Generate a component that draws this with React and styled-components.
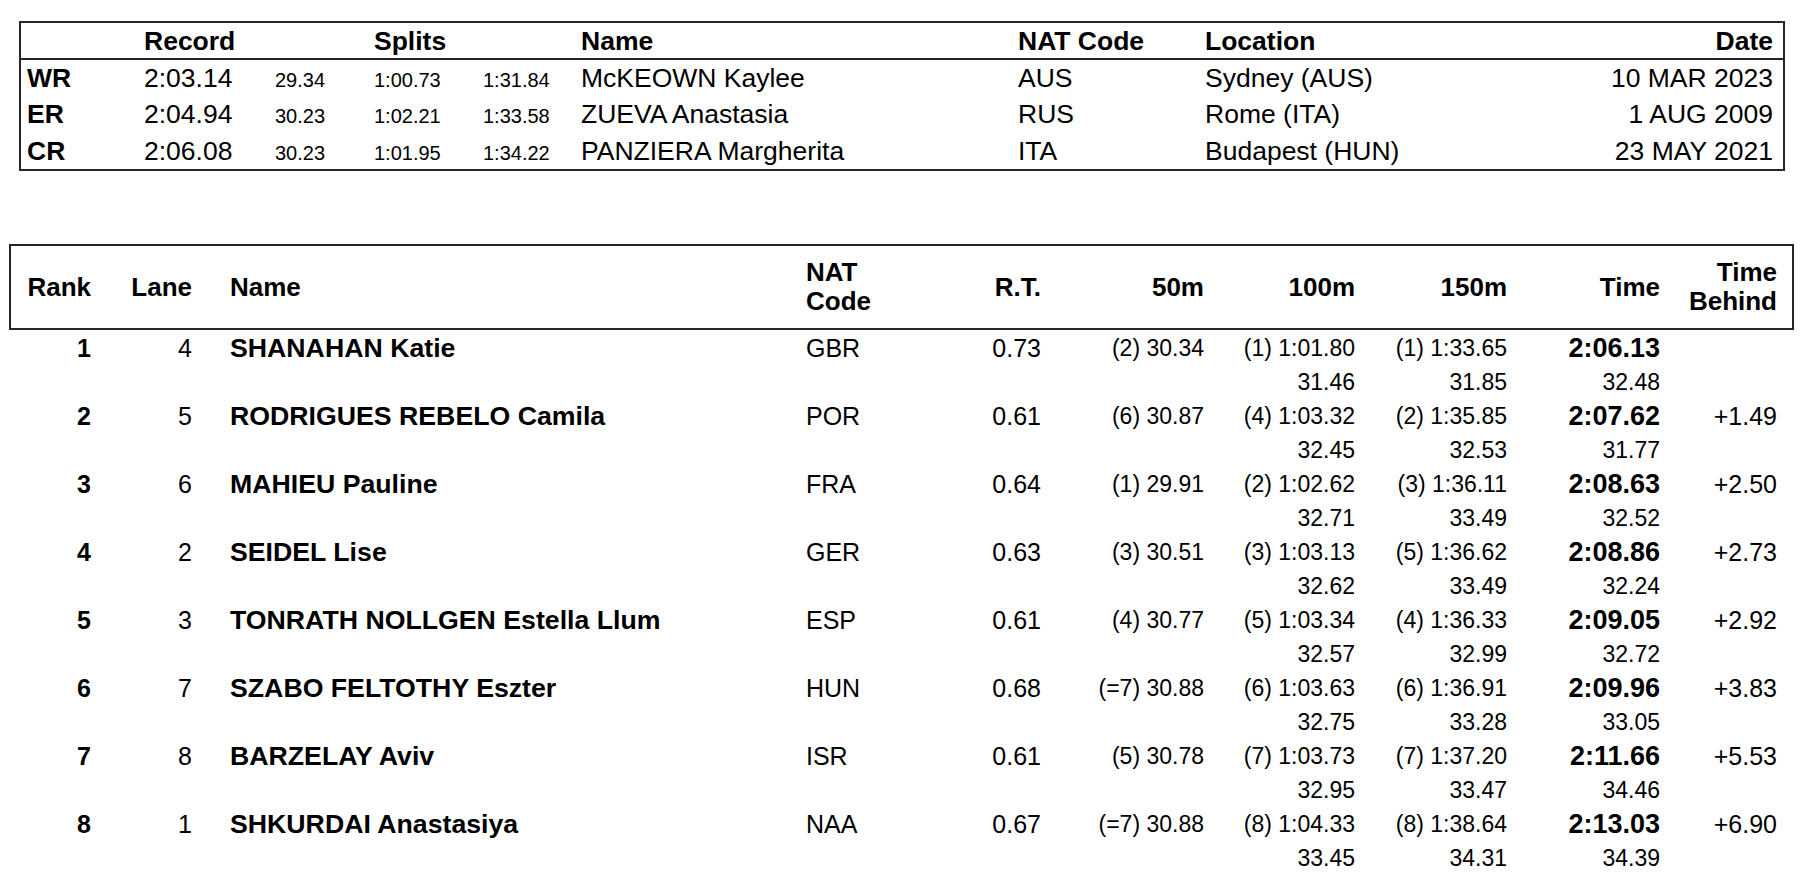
import React from "react";
import styled, { createGlobalStyle } from "styled-components";

const GlobalStyle = createGlobalStyle`
  html, body {
    margin: 0;
    padding: 0;
    background: #ffffff;
  }
  body {
    font-family: "Liberation Sans", Arial, sans-serif;
    color: #000;
  }
`;

const Page = styled.div`
  display: flex;
  flex-direction: column;
  padding-top: 21px;
`;

/* ---------- records box ---------- */

const RecordBox = styled.div`
  margin-left: 19px;
  width: 1766px;
  box-sizing: border-box;
  border: 2px solid #262626;
`;

const recordCols = "117px 131px 99px 109px 98px 437px 187px 1fr auto";

const RecordHead = styled.div`
  display: grid;
  grid-template-columns: ${recordCols};
  align-items: baseline;
  height: 35px;
  line-height: 36px;
  padding: 0 10px 0 6px;
  border-bottom: 2px solid #262626;
  font-size: 26.5px;
  font-weight: 700;
`;

const RecordRow = styled.div`
  display: grid;
  grid-template-columns: ${recordCols};
  align-items: baseline;
  height: 36.4px;
  line-height: 36px;
  padding: 0 10px 0 6px;
  font-size: 26.5px;
`;

const RecCell = styled.span`
  white-space: nowrap;
  font-weight: ${(p) => (p.$bold ? 700 : "inherit")};
  font-size: ${(p) => (p.$small ? "20px" : "inherit")};
  text-align: ${(p) => p.$align || "left"};
`;

/* ---------- results ---------- */

const Results = styled.div`
  margin-top: 73px;
  margin-left: 9px;
  width: 1785px;
  display: flex;
  flex-direction: column;
`;

const resultCols = "80px 101px 614px 144px 91px 163px 151px 152px 153px 117px";

const ResultHead = styled.div`
  display: grid;
  grid-template-columns: ${resultCols};
  align-items: center;
  height: 82px;
  box-sizing: content-box;
  padding-right: 13px;
  border: 2px solid #262626;
  font-size: 26px;
  font-weight: 700;
  line-height: 29px;
`;

const HeadCell = styled.div`
  text-align: ${(p) => p.$align || "left"};
  padding-left: ${(p) => p.$indent || 0}px;
  white-space: nowrap;
`;

const ResultRow = styled.div`
  display: grid;
  grid-template-columns: ${resultCols};
  height: 68px;
  margin: 0 2px;
  align-items: start;
`;

const Cell = styled.div`
  display: flex;
  flex-direction: column;
  align-items: ${(p) => (p.$align === "right" ? "flex-end" : "flex-start")};
  padding-left: ${(p) => p.$indent || 0}px;
  line-height: 37px;
  white-space: nowrap;
`;

const Main = styled.span`
  font-size: ${(p) => p.$size || 25}px;
  font-weight: ${(p) => (p.$bold ? 700 : 400)};
`;

const Sub = styled.span`
  margin-top: -3px;
  font-size: 23px;
`;

const records = [
  ["WR", "2:03.14", "29.34", "1:00.73", "1:31.84", "McKEOWN Kaylee", "AUS", "Sydney (AUS)", "10 MAR 2023"],
  ["ER", "2:04.94", "30.23", "1:02.21", "1:33.58", "ZUEVA Anastasia", "RUS", "Rome (ITA)", "1 AUG 2009"],
  ["CR", "2:06.08", "30.23", "1:01.95", "1:34.22", "PANZIERA Margherita", "ITA", "Budapest (HUN)", "23 MAY 2021"],
];

const results = [
  { rank: 1, lane: 4, name: "SHANAHAN Katie", nat: "GBR", rt: "0.73", s50: "(2) 30.34", s100: ["(1) 1:01.80", "31.46"], s150: ["(1) 1:33.65", "31.85"], time: ["2:06.13", "32.48"], behind: "" },
  { rank: 2, lane: 5, name: "RODRIGUES REBELO Camila", nat: "POR", rt: "0.61", s50: "(6) 30.87", s100: ["(4) 1:03.32", "32.45"], s150: ["(2) 1:35.85", "32.53"], time: ["2:07.62", "31.77"], behind: "+1.49" },
  { rank: 3, lane: 6, name: "MAHIEU Pauline", nat: "FRA", rt: "0.64", s50: "(1) 29.91", s100: ["(2) 1:02.62", "32.71"], s150: ["(3) 1:36.11", "33.49"], time: ["2:08.63", "32.52"], behind: "+2.50" },
  { rank: 4, lane: 2, name: "SEIDEL Lise", nat: "GER", rt: "0.63", s50: "(3) 30.51", s100: ["(3) 1:03.13", "32.62"], s150: ["(5) 1:36.62", "33.49"], time: ["2:08.86", "32.24"], behind: "+2.73" },
  { rank: 5, lane: 3, name: "TONRATH NOLLGEN Estella Llum", nat: "ESP", rt: "0.61", s50: "(4) 30.77", s100: ["(5) 1:03.34", "32.57"], s150: ["(4) 1:36.33", "32.99"], time: ["2:09.05", "32.72"], behind: "+2.92" },
  { rank: 6, lane: 7, name: "SZABO FELTOTHY Eszter", nat: "HUN", rt: "0.68", s50: "(=7) 30.88", s100: ["(6) 1:03.63", "32.75"], s150: ["(6) 1:36.91", "33.28"], time: ["2:09.96", "33.05"], behind: "+3.83" },
  { rank: 7, lane: 8, name: "BARZELAY Aviv", nat: "ISR", rt: "0.61", s50: "(5) 30.78", s100: ["(7) 1:03.73", "32.95"], s150: ["(7) 1:37.20", "33.47"], time: ["2:11.66", "34.46"], behind: "+5.53" },
  { rank: 8, lane: 1, name: "SHKURDAI Anastasiya", nat: "NAA", rt: "0.67", s50: "(=7) 30.88", s100: ["(8) 1:04.33", "33.45"], s150: ["(8) 1:38.64", "34.31"], time: ["2:13.03", "34.39"], behind: "+6.90" },
];

function RecordsTable() {
  return (
    <RecordBox>
      <RecordHead>
        <RecCell />
        <RecCell>Record</RecCell>
        <RecCell />
        <RecCell>Splits</RecCell>
        <RecCell />
        <RecCell>Name</RecCell>
        <RecCell>NAT Code</RecCell>
        <RecCell>Location</RecCell>
        <RecCell $align="right">Date</RecCell>
      </RecordHead>
      {records.map((r) => (
        <RecordRow key={r[0]}>
          <RecCell $bold>{r[0]}</RecCell>
          <RecCell>{r[1]}</RecCell>
          <RecCell $small>{r[2]}</RecCell>
          <RecCell $small>{r[3]}</RecCell>
          <RecCell $small>{r[4]}</RecCell>
          <RecCell>{r[5]}</RecCell>
          <RecCell>{r[6]}</RecCell>
          <RecCell>{r[7]}</RecCell>
          <RecCell $align="right">{r[8]}</RecCell>
        </RecordRow>
      ))}
    </RecordBox>
  );
}

function SplitCell({ value }) {
  return (
    <Cell $align="right">
      <Main $size={23}>{value[0]}</Main>
      <Sub>{value[1]}</Sub>
    </Cell>
  );
}

function ResultsTable() {
  return (
    <Results>
      <ResultHead>
        <HeadCell $align="right">Rank</HeadCell>
        <HeadCell $align="right">Lane</HeadCell>
        <HeadCell $indent={38}>Name</HeadCell>
        <HeadCell>
          NAT
          <br />
          Code
        </HeadCell>
        <HeadCell $align="right">R.T.</HeadCell>
        <HeadCell $align="right">50m</HeadCell>
        <HeadCell $align="right">100m</HeadCell>
        <HeadCell $align="right">150m</HeadCell>
        <HeadCell $align="right">Time</HeadCell>
        <HeadCell $align="right">
          Time
          <br />
          Behind
        </HeadCell>
      </ResultHead>
      {results.map((r) => (
        <ResultRow key={r.rank}>
          <Cell $align="right">
            <Main $bold>{r.rank}</Main>
          </Cell>
          <Cell $align="right">
            <Main>{r.lane}</Main>
          </Cell>
          <Cell $indent={38}>
            <Main $bold $size={26.7}>
              {r.name}
            </Main>
          </Cell>
          <Cell>
            <Main>{r.nat}</Main>
          </Cell>
          <Cell $align="right">
            <Main>{r.rt}</Main>
          </Cell>
          <Cell $align="right">
            <Main $size={23}>{r.s50}</Main>
          </Cell>
          <SplitCell value={r.s100} />
          <SplitCell value={r.s150} />
          <Cell $align="right">
            <Main $bold $size={27}>
              {r.time[0]}
            </Main>
            <Sub>{r.time[1]}</Sub>
          </Cell>
          <Cell $align="right">
            <Main>{r.behind}</Main>
          </Cell>
        </ResultRow>
      ))}
    </Results>
  );
}

export default function App() {
  return (
    <>
      <GlobalStyle />
      <Page>
        <RecordsTable />
        <ResultsTable />
      </Page>
    </>
  );
}
